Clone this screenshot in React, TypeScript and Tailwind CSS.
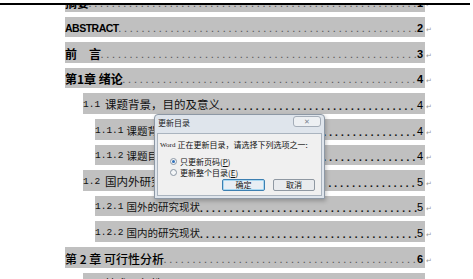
import React from "react";

type Entry = {
  num?: string;
  title: string;
  page: string;
  level: 1 | 2 | 3;
  bold?: boolean;
  latin?: boolean;
};

const entries: Entry[] = [
  { title: "摘要", page: "1", level: 1, bold: true },
  { title: "ABSTRACT", page: "2", level: 1, bold: true, latin: true },
  { title: "前\u3000言", page: "3", level: 1, bold: true },
  { title: "第1章 绪论", page: "4", level: 1, bold: true },
  { num: "1.1", title: "课题背景，目的及意义", page: "4", level: 2 },
  { num: "1.1.1", title: "课题背景", page: "4", level: 3 },
  { num: "1.1.2", title: "课题目的", page: "4", level: 3 },
  { num: "1.2", title: "国内外研究现状", page: "5", level: 2 },
  { num: "1.2.1", title: "国外的研究现状", page: "5", level: 3 },
  { num: "1.2.2", title: "国内的研究现状", page: "5", level: 3 },
  { title: "第 2 章  可行性分析", page: "6", level: 1 },
  { num: "2.1", title: "技术可行性", page: "6", level: 2 },
];

const leader = ".".repeat(120);

// band runs from its indent to x=425
const band = {
  1: "ml-[65px] w-[360px]",
  2: "ml-[83px] w-[342px]",
  3: "ml-[95px] w-[330px]",
};

const TocRow = ({ e }: { e: Entry }) => {
  const cjk = "font-['Noto_Sans_CJK_SC',sans-serif]";
  return (
    <div className="flex h-[20.6px] shrink-0">
      <div className={`${band[e.level]} flex shrink-0 items-end bg-[#c0c0c0] pb-[2px] pr-[2px]`}>
        {e.level === 1 ? (
          <span
            className={
              e.latin
                ? "font-['Liberation_Sans',sans-serif] text-[10.5px] font-bold leading-[14px] tracking-[-0.5px] text-black"
                : `${cjk} text-[12px] leading-[15px] text-black ${e.bold ? "font-bold" : "font-medium"}`
            }
          >
            {e.title}
          </span>
        ) : (
          <span className="flex items-end whitespace-nowrap leading-[15px] text-[#111]">
            <span className="font-['Liberation_Mono',monospace] text-[9.5px]">{e.num}</span>
            <span className={`${cjk} ${e.level === 2 ? "ml-[5px] text-[11.5px]" : "ml-[3px] text-[10.5px]"}`}>
              {e.title}
            </span>
          </span>
        )}
        <span
          className={`min-w-0 flex-1 overflow-hidden whitespace-nowrap font-['Liberation_Serif',serif] font-bold ${
            e.level === 1
              ? "text-[8px] leading-[11px] tracking-[3.8px] text-[#555]"
              : "text-[11px] leading-[12px] tracking-[3.2px] text-[#111]"
          }`}
        >
          {leader}
        </span>
        <span
          className={`font-['Liberation_Sans',sans-serif] text-[11px] leading-[13px] text-black ${
            e.level === 1 ? "font-bold" : ""
          }`}
        >
          {e.page}
        </span>
      </div>
      <span className="self-end pb-[3px] pl-[1px] text-[7px] leading-[8px] text-[#999]">↵</span>
    </div>
  );
};

const Radio = ({ checked }: { checked?: boolean }) => (
  <span className="flex h-[7px] w-[7px] items-center justify-center rounded-full border border-[#8a96a3] bg-[#f4f6f8]">
    {checked && <span className="h-[3px] w-[3px] rounded-full bg-[#2f6fb9]" />}
  </span>
);

const UpdateDialog = () => (
  <div className="absolute left-[154px] top-[114px] flex h-[85px] w-[171px] flex-col rounded-t-[4px] border border-[#8d98a5] bg-[#dfe5ec] font-['Noto_Sans_CJK_SC',sans-serif] shadow-[1px_2px_4px_rgba(0,0,0,0.25)]">
    <div className="flex h-[18px] items-start justify-between px-[3px] pt-[1px]">
      <span className="pt-[2px] text-[8px] leading-[10px] text-[#1c1c1c]">更新目录</span>
      <span className="flex h-[11px] w-[28px] items-center justify-center rounded-[3px] border border-[#a4adb8] bg-[#edf0f3] text-[7px] leading-none text-[#7c8590]">
        ✕
      </span>
    </div>
    <div className="mx-[2px] mb-[2px] flex flex-1 flex-col border border-[#aab4bf] bg-[#f0f0f0] px-[2px] pt-[6px]">
      <div className="flex items-center whitespace-nowrap text-[8px] leading-[10px] text-[#111]">
        <span className="mr-[2px] font-['Liberation_Serif',serif] text-[7px]">Word</span>
        正在更新目录，请选择下列选项之一:
      </div>
      <div className="mt-[6px] flex items-center gap-[3px] pl-[10px] text-[8px] leading-[11px] text-[#111]">
        <Radio checked />
        <span>
          只更新页码(<span className="underline">P</span>)
        </span>
      </div>
      <div className="flex items-center gap-[3px] pl-[10px] text-[8px] leading-[11px] text-[#111]">
        <Radio />
        <span>
          更新整个目录(<span className="underline">E</span>)
        </span>
      </div>
      <div className="mt-[1px] flex justify-end gap-[8px] pr-[4px]">
        <span className="flex h-[12px] w-[43px] items-center justify-center rounded-[2px] border border-[#3c7fb1] bg-[#e8eef4] text-[8px] text-[#111] shadow-[inset_0_0_0_1px_#a8d8f2]">
          确定
        </span>
        <span className="flex h-[12px] w-[42px] items-center justify-center rounded-[2px] border border-[#8f98a2] bg-[#e9ebee] text-[8px] text-[#111]">
          取消
        </span>
      </div>
    </div>
  </div>
);

const App = () => {
  return (
    <div className="relative h-[279px] w-[473px] overflow-hidden bg-white">
      <div className="h-[3px]" />
      <div className="h-[2px] w-[470px] bg-black" />
      <div className="h-[274px] w-[470px] overflow-hidden">
        <div className="mt-[-14px] flex flex-col gap-[5px]">
          {entries.map((e, i) => (
            <TocRow key={i} e={e} />
          ))}
        </div>
      </div>
      <UpdateDialog />
    </div>
  );
};

export default App;
